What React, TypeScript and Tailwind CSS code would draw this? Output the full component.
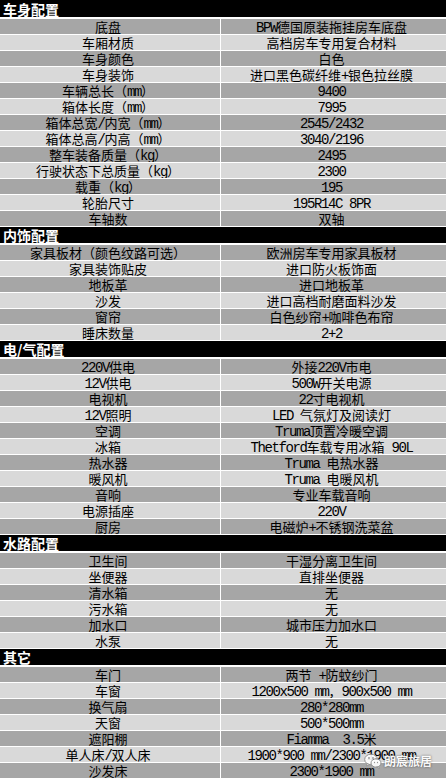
import React from "react";

type Section = { title: string; rows: [string, string][]; first?: boolean; extra?: boolean };

const sections: Section[] = [
  {
    title: "车身配置",
    first: true,
    rows: [
      ["底盘", "BPW德国原装拖挂房车底盘"],
      ["车厢材质", "高档房车专用复合材料"],
      ["车身颜色", "白色"],
      ["车身装饰", "进口黑色碳纤维+银色拉丝膜"],
      ["车辆总长（mm）", "9400"],
      ["箱体长度（mm）", "7995"],
      ["箱体总宽/内宽（mm）", "2545/2432"],
      ["箱体总高/内高（mm）", "3040/2196"],
      ["整车装备质量（kg）", "2495"],
      ["行驶状态下总质量（kg）", "2300"],
      ["载重（kg）", "195"],
      ["轮胎尺寸", "195R14C 8PR"],
      ["车轴数", "双轴"],
    ],
  },
  {
    title: "内饰配置",
    rows: [
      ["家具板材（颜色纹路可选）", "欧洲房车专用家具板材"],
      ["家具装饰贴皮", "进口防火板饰面"],
      ["地板革", "进口地板革"],
      ["沙发", "进口高档耐磨面料沙发"],
      ["窗帘", "白色纱帘+咖啡色布帘"],
      ["睡床数量", "2+2"],
    ],
  },
  {
    title: "电/气配置",
    rows: [
      ["220V供电", "外接220V市电"],
      ["12V供电", "500W开关电源"],
      ["电视机", "22寸电视机"],
      ["12V照明", "LED 气氛灯及阅读灯"],
      ["空调", "Truma顶置冷暖空调"],
      ["冰箱", "Thetford车载专用冰箱 90L"],
      ["热水器", "Truma 电热水器"],
      ["暖风机", "Truma 电暖风机"],
      ["音响", "专业车载音响"],
      ["电源插座", "220V"],
      ["厨房", "电磁炉+不锈钢洗菜盆"],
    ],
  },
  {
    title: "水路配置",
    extra: true,
    rows: [
      ["卫生间", "干湿分离卫生间"],
      ["坐便器", "直排坐便器"],
      ["清水箱", "无"],
      ["污水箱", "无"],
      ["加水口", "城市压力加水口"],
      ["水泵", "无"],
    ],
  },
  {
    title: "其它",
    extra: true,
    rows: [
      ["车门", "两节 +防蚊纱门"],
      ["车窗", "1200x500 mm，900x500 mm"],
      ["换气扇", "280*280mm"],
      ["天窗", "500*500mm"],
      ["遮阳棚", "Fiamma  3.5米"],
      ["单人床/双人床", "1900*900 mm/2300*1900 mm"],
      ["沙发床", "2300*1900 mm"],
    ],
  },
];

function Mixed({ text }: { text: string }) {
  const parts = text.split(/([\x20-\x7e]+)/).filter((p) => p.length > 0);
  return (
    <>
      {parts.map((p, i) =>
        /^[\x20-\x7e]+$/.test(p) ? (
          <span
            key={i}
            className="font-['Liberation_Mono',monospace] text-[14px] leading-[8px] tracking-[-1.4px]"
          >
            {p}
          </span>
        ) : (
          <span key={i}>{p}</span>
        )
      )}
    </>
  );
}

function Row({ left, right, dark }: { left: string; right: string; dark: boolean }) {
  const bg = dark ? "bg-[#a6a6a6]" : "bg-[#d9d9d9]";
  return (
    <div className="flex h-[15px] mb-[1px] gap-[1px]">
      <div
        className={`w-[220px] shrink-0 ${bg} pr-[4px] text-center text-[13px] leading-[15px] whitespace-pre overflow-hidden`}
      >
        <Mixed text={left} />
      </div>
      <div
        className={`flex-1 ${bg} pr-[4px] text-center text-[13px] leading-[15px] whitespace-pre overflow-hidden`}
      >
        <Mixed text={right} />
      </div>
    </div>
  );
}

function Header({ title, first, extra }: { title: string; first?: boolean; extra?: boolean }) {
  return (
    <div
      className={`${first ? "h-[17px] pt-[2px]" : "h-[16px] pt-[1px]"} ${
        extra ? "mt-[1px]" : ""
      } mb-[2px] bg-black text-white font-bold text-[14px] leading-[15px] pl-[3px] overflow-hidden`}
    >
      {title}
    </div>
  );
}

export default function App() {
  return (
    <div className="relative w-[446px] h-[782px] overflow-hidden bg-white text-black font-['Noto_Sans_CJK_SC',sans-serif]">
      {sections.map((s) => (
        <div key={s.title}>
          <Header title={s.title} first={s.first} extra={s.extra} />
          {s.rows.map((r, i) => (
            <Row key={i} left={r[0]} right={r[1]} dark={i % 2 === 0} />
          ))}
        </div>
      ))}
      <div className="absolute left-[364px] top-[753px] flex items-center gap-[2px] opacity-90">
        <svg width="18" height="16" viewBox="0 0 18 16">
          <ellipse cx="7" cy="6.5" rx="6.3" ry="5.3" fill="#fff" stroke="#8a8a8a" strokeWidth="1" />
          <path d="M3 10.5 L2.5 13 L5.5 11.5 Z" fill="#fff" stroke="#8a8a8a" strokeWidth="0.8" />
          <ellipse cx="12" cy="10" rx="5" ry="4.2" fill="#fff" stroke="#8a8a8a" strokeWidth="1" />
          <path d="M14.5 13.5 L15.5 15.5 L12.5 14 Z" fill="#fff" stroke="#8a8a8a" strokeWidth="0.8" />
          <circle cx="5" cy="5" r="0.9" fill="#8a8a8a" />
          <circle cx="9" cy="5" r="0.9" fill="#8a8a8a" />
          <circle cx="10.5" cy="9.5" r="0.7" fill="#8a8a8a" />
          <circle cx="13.5" cy="9.5" r="0.7" fill="#8a8a8a" />
        </svg>
        <span className="text-[12px] leading-[14px] text-white font-bold [text-shadow:0_0_2px_rgba(0,0,0,0.7)]">
          朗宸旅居
        </span>
      </div>
    </div>
  );
}
